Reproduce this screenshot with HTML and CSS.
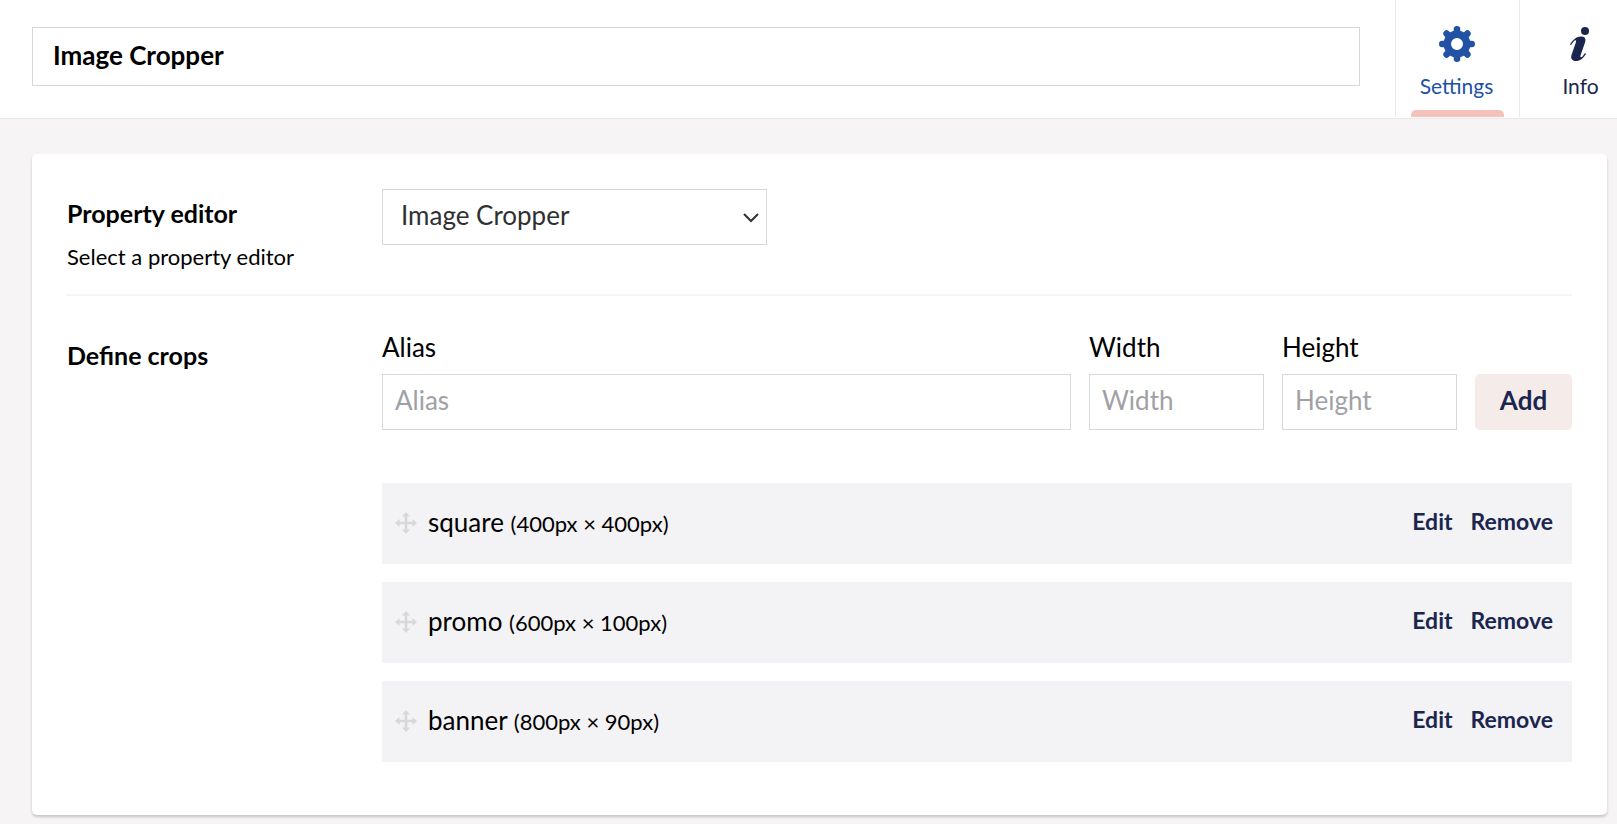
FILE: index.html
```html
<!DOCTYPE html>
<html lang="en">
<head>
<meta charset="utf-8">
<title>Image Cropper</title>
<link rel="stylesheet" href="styles.css">
</head>
<body>
<svg class="sprite" aria-hidden="true">
  <symbol id="move" viewBox="0 0 22 22">
    <path d="M11 0l4 4.500h-2.700v5.200h5.200V7L22 11l-4.500 4v-2.700h-5.200v5.200H15L11 22l-4-4.500h2.700v-5.200H4.500V15L0 11l4.500-4v2.700h5.200V4.500H7z"/>
  </symbol>
</svg>
<header class="header">
  <input class="name-input" type="text" value="Image Cropper" aria-label="Name">
  <nav class="tabs">
    <button class="tab tab-active" type="button">
      <svg class="tab-icon" viewBox="-18 -18 36 36" aria-hidden="true">
        <g fill="none" stroke="currentColor">
          <circle r="9.700" stroke-width="7.400"/>
          <path id="teeth" d="M0-14.700V-11M0 11V14.700M-14.700 0H-11M11 0H14.700" stroke-width="6.600" stroke-linecap="round"/>
          <use href="#teeth" transform="rotate(45)"/>
        </g>
      </svg>
      <span>Settings</span>
    </button>
    <button class="tab" type="button">
      <svg class="tab-icon" viewBox="0 0 36 36" aria-hidden="true">
        <g fill="currentColor"><circle cx="22" cy="5" r="4"/>
        <path d="M7 18.500c3-5 7-8.500 12-8c3.500 .5 4 3 3 6l-4.500 13c-.5 2 .5 2 2 1l2.500-3.500l1 1c-3 4.500-6 7-10 7c-4 0-5.500-2.500-4.500-6l4.500-13c.5-2-.5-2-2-1l-3 4z"/></g>
      </svg>
      <span>Info</span>
    </button>
  </nav>
</header>
<main class="content">
  <section class="card">
    <div class="property property-divided">
      <div class="property-label">
        <label class="property-name" for="editor">Property editor</label>
        <p class="property-help">Select a property editor</p>
      </div>
      <div class="select-wrap">
        <select class="select" id="editor"><option>Image Cropper</option></select>
        <svg class="chevron" viewBox="0 0 16 10" aria-hidden="true"><path d="M1 1l7 7l7-7" fill="none" stroke="currentColor" stroke-width="2"/></svg>
      </div>
    </div>
    <div class="property property-crops">
      <div class="property-label"><h2 class="property-name">Define crops</h2></div>
      <div class="crops">
        <form class="crop-form">
          <div class="field field-wide"><label for="alias">Alias</label><input class="field-input" id="alias" type="text" placeholder="Alias"></div>
          <div class="field"><label for="width">Width</label><input class="field-input" id="width" type="text" placeholder="Width"></div>
          <div class="field"><label for="height">Height</label><input class="field-input" id="height" type="text" placeholder="Height"></div>
          <button class="add" type="button">Add</button>
        </form>
        <ul class="crop-list">
          <li class="crop"><svg class="move" aria-hidden="true"><use href="#move"/></svg><span class="crop-text">square <small>(400px × 400px)</small></span><button class="action" type="button">Edit</button><button class="action" type="button">Remove</button></li>
          <li class="crop"><svg class="move" aria-hidden="true"><use href="#move"/></svg><span class="crop-text">promo <small>(600px × 100px)</small></span><button class="action" type="button">Edit</button><button class="action" type="button">Remove</button></li>
          <li class="crop"><svg class="move" aria-hidden="true"><use href="#move"/></svg><span class="crop-text">banner <small>(800px × 90px)</small></span><button class="action" type="button">Edit</button><button class="action" type="button">Remove</button></li>
        </ul>
      </div>
    </div>
  </section>
</main>
</body>
</html>
```
FILE: styles.css
```css
* {
  box-sizing: border-box;
}

body {
  margin: 0;
  min-height: 100vh;
  overflow-x: hidden;
  background: #f6f4f5;
  color: #000;
  font-family: Lato, "Open Sans", sans-serif;
  font-size: 26px;
  line-height: 32px;
}

button,
input,
select {
  margin: 0;
  font: inherit;
  border-radius: 0;
}

button {
  border: 0;
  background: none;
  cursor: pointer;
}

.sprite {
  display: none;
}

.header {
  display: flex;
  align-items: stretch;
  gap: 35px;
  height: 119px;
  padding-left: 32px;
  margin-right: -26px;
  background: #fff;
  border-bottom: 1px solid #e9e9eb;
}

.name-input {
  flex: 1;
  min-width: 0;
  height: 59px;
  margin-top: 27px;
  padding: 0 20px 3px;
  border: 1px solid #d8d7d9;
  color: #000;
  font-weight: 700;
}

.tabs {
  display: flex;
  height: 117px;
}

.tab {
  position: relative;
  display: flex;
  flex-direction: column;
  align-items: center;
  gap: 8px;
  width: 124px;
  padding: 26px 2px 0 0;
  border-left: 1px solid #e9e9eb;
  color: #1b264f;
  font-size: 21px;
}

.tab-active {
  color: #2152a3;
}

.tab-active::after {
  content: "";
  position: absolute;
  right: 15px;
  bottom: 0;
  left: 15px;
  height: 7px;
  border-radius: 5px 5px 0 0;
  background: #f5c1bc;
}

.tab-icon {
  width: 36px;
  height: 36px;
}

.content {
  padding: 35px 10px 9px 32px;
}

.card {
  padding: 35px 35px 53px;
  border-radius: 5px;
  background: #fff;
  box-shadow: 0 2px 3px rgba(0, 0, 0, 0.2);
}

.property {
  display: flex;
}

.property-divided {
  padding-bottom: 21px;
  border-bottom: 2px solid #f6f4f5;
}

.property-label {
  flex: none;
  width: 315px;
  padding-top: 8px;
}

.property-name {
  display: block;
  margin: 0;
  font-size: 25px;
  font-weight: 700;
}

.property-help {
  margin: 12px 0 0;
  font-size: 22px;
}

.select-wrap {
  position: relative;
  width: 385px;
  height: 56px;
}

.select {
  appearance: none;
  width: 100%;
  height: 56px;
  padding: 0 40px 4px 18px;
  border: 1px solid #d8d7d9;
  background: #fff;
  color: #303033;
}

.chevron {
  position: absolute;
  top: 24px;
  right: 8px;
  width: 16px;
  height: 10px;
  color: #303033;
  pointer-events: none;
}

.property-crops {
  padding-top: 35px;
}

.crops {
  flex: 1;
  min-width: 0;
}

.crop-form {
  display: flex;
  align-items: flex-end;
  gap: 18px;
}

.field {
  display: flex;
  flex-direction: column;
  gap: 11px;
  width: 175px;
}

.field-wide {
  flex: 1;
}

.field-input {
  width: 100%;
  height: 56px;
  padding: 0 12px 4px;
  border: 1px solid #d8d7d9;
}

.field-input::placeholder {
  color: #a1a1a5;
  opacity: 1;
}

.add {
  width: 97px;
  height: 56px;
  padding: 0 0 5px;
  border-radius: 5px;
  background: #f5ecea;
  color: #1b264f;
  font-weight: 700;
}

.crop-list {
  display: flex;
  flex-direction: column;
  gap: 18px;
  margin: 53px 0 0;
  padding: 0;
  list-style: none;
}

.crop {
  display: flex;
  align-items: center;
  height: 81px;
  padding: 0 19px 2px 13px;
  background: #f3f3f5;
}

.move {
  width: 22px;
  height: 22px;
  margin-right: 11px;
  fill: #d8d7d9;
}

.crop-text {
  flex: 1;
}

.crop-text small {
  font-size: 22px;
}

.action {
  margin-left: 18px;
  padding: 0 0 3px;
  color: #1b264f;
  font-size: 23px;
  font-weight: 700;
}
```
